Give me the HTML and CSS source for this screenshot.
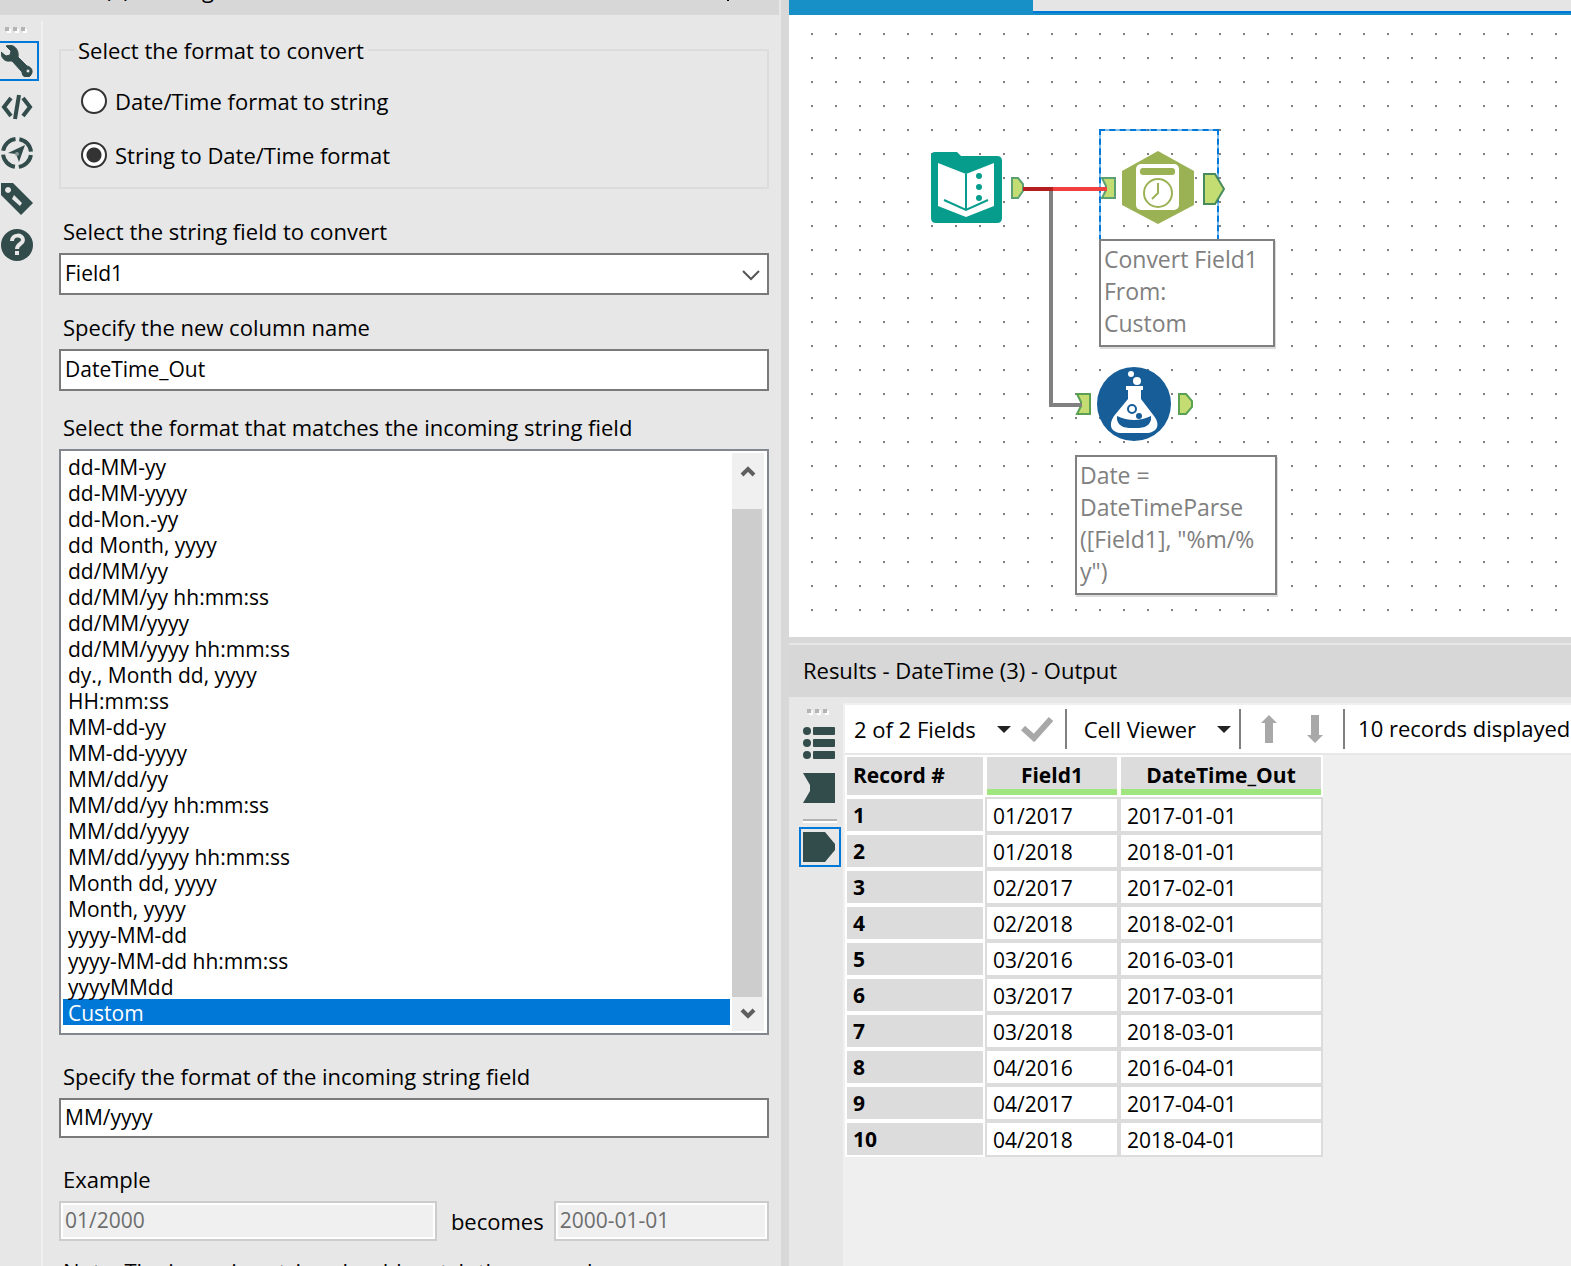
FILE: index.html
```
<!DOCTYPE html>
<html lang="en">
<head>
  <meta charset="UTF-8">
  <meta name="viewport" content="width=device-width, initial-scale=1.0">
  <title>DateTime (3) - Configuration</title>
  <link rel="stylesheet" href="styles.css">
</head>
<body>
  <div class="app">
    <section class="config">
      <header class="titlebar">
        <span class="title">DateTime (3) - Configuration</span>
        <span class="pin"></span>
      </header>
      <div class="config-body">
        <nav class="tools">
          <div class="grip"><i></i><i></i><i></i></div>
          <button class="tool active" aria-label="Configuration">
            <svg viewBox="0 0 32 32"><path d="M0 7c0 5 3 10 9 9l2 0 10 11c0 5 5 7 8 4 4-4 2-9-3-10L17 12c1-6-2-11-8-12L5 1l5 5-1 4-4 1zM27 24a2 2 0 1 1 0 4 2 2 0 0 1 0-4z" fill-rule="evenodd" stroke="#324b4b"/></svg>
          </button>
          <button class="tool" aria-label="XML view">
            <svg viewBox="0 0 32 32"><path d="M10 7L3 16l7 9M22 7l7 9-7 9M18 4l-4 24" fill="none" stroke="#324b4b" stroke-width="4"/></svg>
          </button>
          <button class="tool" aria-label="Navigation">
            <svg viewBox="0 0 32 32"><circle cx="16" cy="16" r="14" fill="none" stroke="#324b4b" stroke-width="4" stroke-dasharray="18 4" stroke-dashoffset="-2"/><path d="M24 8l-6 17-3-8-8-1z"/><circle cx="16" cy="17" r="2" fill="#8a9999"/></svg>
          </button>
          <button class="tool" aria-label="Annotation">
            <svg viewBox="0 0 32 32"><path d="M0 0h12l20 20-12 12L0 12zM7 4a3 3 0 1 0 .1 0zM13 12l-2 4 8 7 2-3z" fill-rule="evenodd"/></svg>
          </button>
          <button class="tool" aria-label="Help">
            <svg viewBox="0 0 32 32"><circle cx="16" cy="16" r="16"/><path d="M11 12c0-7 11-7 11-1 0 4-6 4-6 9" fill="none" stroke="#e7e7e7" stroke-width="4"/><path d="M14 22h4v4h-4z" fill="#e7e7e7"/></svg>
          </button>
        </nav>
        <form class="form">
          <fieldset class="direction">
            <legend>Select the format to convert</legend>
            <label class="radio"><input type="radio" name="direction">Date/Time format to string</label>
            <label class="radio"><input type="radio" name="direction" checked>String to Date/Time format</label>
          </fieldset>

          <div class="field">
            <label for="string-field">Select the string field to convert</label>
            <div class="combo">
              <select id="string-field" class="box"><option>Field1</option></select>
              <svg class="chevron" viewBox="0 0 18 12"><path d="M1 2l8 8 8-8"/></svg>
            </div>
          </div>

          <div class="field column">
            <label for="column-name">Specify the new column name</label>
            <input id="column-name" class="box" type="text" value="DateTime_Out">
          </div>

          <div class="field format">
            <label for="format-list">Select the format that matches the incoming string field</label>
            <div class="listbox">
              <select id="format-list" size="22">
                <option>dd-MM-yy</option>
                <option>dd-MM-yyyy</option>
                <option>dd-Mon.-yy</option>
                <option>dd Month, yyyy</option>
                <option>dd/MM/yy</option>
                <option>dd/MM/yy hh:mm:ss</option>
                <option>dd/MM/yyyy</option>
                <option>dd/MM/yyyy hh:mm:ss</option>
                <option>dy., Month dd, yyyy</option>
                <option>HH:mm:ss</option>
                <option>MM-dd-yy</option>
                <option>MM-dd-yyyy</option>
                <option>MM/dd/yy</option>
                <option>MM/dd/yy hh:mm:ss</option>
                <option>MM/dd/yyyy</option>
                <option>MM/dd/yyyy hh:mm:ss</option>
                <option>Month dd, yyyy</option>
                <option>Month, yyyy</option>
                <option>yyyy-MM-dd</option>
                <option>yyyy-MM-dd hh:mm:ss</option>
                <option>yyyyMMdd</option>
                <option selected>Custom</option>
              </select>
              <div class="scrollbar">
                <button type="button" class="scroll-up" aria-label="Scroll up"><svg viewBox="0 0 16 12"><path d="M2 10l6-6 6 6"/></svg></button>
                <div class="thumb"></div>
                <button type="button" class="scroll-down" aria-label="Scroll down"><svg viewBox="0 0 16 12"><path d="M2 2l6 6 6-6"/></svg></button>
              </div>
            </div>
          </div>

          <div class="field format">
            <label for="format">Specify the format of the incoming string field</label>
            <input id="format" class="box short" type="text" value="MM/yyyy">
          </div>

          <div class="field last">
            <label for="example-in">Example</label>
            <div class="example">
              <input id="example-in" class="box short in" type="text" value="01/2000" disabled>
              <label for="example-out">becomes</label>
              <input id="example-out" class="box short out" type="text" value="2000-01-01" disabled>
            </div>
          </div>
          <p class="note">Note: The incoming string should match the example</p>
        </form>
      </div>
    </section>

    <main class="workspace">
      <div class="tabs"><div class="tab"></div></div>
      <div class="canvas">
        <svg class="node input-node" viewBox="0 0 96 74">
          <path d="M1 5q0-4 4-4h22l4 4h36q5 0 5 5v57q0 5-5 5H6q-5 0-5-5z" fill="#069d8d"/>
          <path d="M8 12l28 11 28-11v43L36 66 8 55z" fill="#fff"/>
          <path d="M36 23v36M14 49l22 10 22-10" fill="none" stroke="#069d8d" stroke-width="2"/>
          <g fill="#069d8d"><circle cx="49" cy="25" r="3"/><circle cx="49" cy="36" r="3"/><circle cx="49" cy="47" r="3"/></g>
          <path d="M82 27h6l5 6v7l-5 7h-6z" fill="#c3dd72" stroke="#5b9f72" stroke-width="2"/>
        </svg>

        <div class="selection"></div>
        <svg class="node datetime-node" viewBox="0 0 128 76">
          <path d="M2 28h13v20H2l4-8v-4z" fill="#c3dd72" stroke="#5b9f72" stroke-width="2"/>
          <path d="M58 1l36 20v34L58 74 22 55V21z" fill="#9bb254"/>
          <rect x="36" y="14" width="43" height="46" rx="5" fill="#fff"/>
          <rect x="40" y="18" width="35" height="7" rx="3" fill="#9bb254"/>
          <path d="M58 33v10l-6 6" fill="none" stroke="#9bb254" stroke-width="2"/>
          <circle cx="58" cy="43" r="14" fill="none" stroke="#9bb254" stroke-width="2"/>
          <path d="M104 24h11l9 15-9 15h-11z" fill="#c3dd72" stroke="#478a5b" stroke-width="2"/>
        </svg>
        <div class="annotation datetime-note">Convert Field1 From:<br>Custom</div>

        <svg class="node formula-node" viewBox="0 0 120 76">
          <path d="M2 28h13v20H2l4-8v-4z" fill="#c3dd72" stroke="#5b9f52" stroke-width="2"/>
          <circle cx="59" cy="38" r="37" fill="#175e99"/>
          <path d="M51 20h17v4h-2v9l13 17c7 9 3 17-8 17H47c-11 0-14-8-8-17l14-17v-9h-2z" fill="#fff"/>
          <path d="M42 50q17 8 34 0 1 11-12 12H54q-13-1-12-12z" fill="#175e99"/>
          <circle cx="57" cy="43" r="4" fill="none" stroke="#175e99" stroke-width="2"/>
          <circle cx="64" cy="50" r="3" fill="#175e99"/>
          <circle cx="62" cy="15" r="4" fill="#fff"/><circle cx="56" cy="8" r="3" fill="#fff"/>
          <path d="M104 28h7l6 7v6l-6 7h-7z" fill="#c3dd72" stroke="#5b9f52" stroke-width="2"/>
        </svg>
        <div class="annotation formula-note">Date = DateTimeParse<br>([Field1], "%m/%<br>y")</div>

        <svg class="wires" viewBox="0 0 500 420">
          <path d="M262 174v216h31" stroke="#808080"/>
          <path d="M262 174h56" stroke="#f04040"/>
          <path d="M234 174h30" stroke="#b41e1e"/>
        </svg>
      </div>

      <section class="results">
        <header class="results-title">Results - DateTime (3) - Output</header>
        <div class="results-body">
          <nav class="views">
            <div class="grip"><i></i><i></i><i></i></div>
            <button class="view" aria-label="Messages">
              <svg viewBox="0 0 32 32"><circle cx="4" cy="4" r="4"/><circle cx="4" cy="16" r="4"/><circle cx="4" cy="28" r="4"/><rect x="10" width="22" height="8" rx="1"/><rect x="10" y="12" width="22" height="8" rx="1"/><rect x="10" y="24" width="22" height="8" rx="1"/></svg>
            </button>
            <button class="view" aria-label="Input anchor">
              <svg viewBox="0 0 32 32"><path d="M0 1h32v30H0l7-12v-6z"/></svg>
            </button>
            <hr>
            <button class="view active" aria-label="Output anchor">
              <svg viewBox="0 0 32 32"><path d="M0 1h22l10 12v6L22 31H0z"/></svg>
            </button>
          </nav>
          <div class="grid">
            <div class="toolbar">
              <button class="menu fields">2 of 2 Fields <i class="caret"></i></button>
              <svg class="check" viewBox="0 0 32 26"><path d="M2 12l11 10L30 3" fill="none" stroke="#a8a8a8" stroke-width="6"/></svg>
              <button class="menu viewer">Cell Viewer <i class="caret"></i></button>
              <div class="arrows">
                <svg viewBox="0 0 16 28"><path d="M8 0l8 8h-4v20H4V8H0z"/></svg>
                <svg viewBox="0 0 16 28"><path d="M8 28l8-8h-4V0H4v20H0z"/></svg>
              </div>
              <span class="count">10 records displayed</span>
            </div>
            <table class="records">
              <thead>
                <tr><th class="num">Record #</th><th class="col short-col">Field1</th><th class="col long-col">DateTime_Out</th></tr>
              </thead>
              <tbody>
                <tr><th>1</th><td>01/2017</td><td>2017-01-01</td></tr>
                <tr><th>2</th><td>01/2018</td><td>2018-01-01</td></tr>
                <tr><th>3</th><td>02/2017</td><td>2017-02-01</td></tr>
                <tr><th>4</th><td>02/2018</td><td>2018-02-01</td></tr>
                <tr><th>5</th><td>03/2016</td><td>2016-03-01</td></tr>
                <tr><th>6</th><td>03/2017</td><td>2017-03-01</td></tr>
                <tr><th>7</th><td>03/2018</td><td>2018-03-01</td></tr>
                <tr><th>8</th><td>04/2016</td><td>2016-04-01</td></tr>
                <tr><th>9</th><td>04/2017</td><td>2017-04-01</td></tr>
                <tr><th>10</th><td>04/2018</td><td>2018-04-01</td></tr>
              </tbody>
            </table>
          </div>
        </div>
      </section>
    </main>
  </div>
</body>
</html>
```
FILE: styles.css
```
* {
  box-sizing: border-box;
}
body {
  margin: 0;
  font-family: "Open Sans", "Noto Sans", sans-serif;
  font-size: 22px;
  line-height: 28px;
  color: #000;
  background: #e7e7e7;
}
button, input, select {
  font: inherit;
  color: inherit;
  margin: 0;
}
input, select {
  font-size: 21px;
}
button {
  border: 0;
  padding: 0;
  background: none;
}
svg {
  display: block;
  fill: #324b4b;
}
.app {
  display: flex;
  height: 100vh;
  overflow: hidden;
}

/* configuration panel */
.config {
  flex: 0 0 50.22%;
  min-width: 0;
  display: flex;
  flex-direction: column;
  border-right: 8px solid #d8d8d8;
}
.titlebar {
  height: 15px;
  flex: none;
  margin-right: 2px;
  display: flex;
  align-items: flex-end;
  justify-content: space-between;
  padding: 0 50px 12px 0;
  background: #d7d7d7;
}
.pin {
  width: 2px;
  height: 28px;
  flex: none;
  margin-bottom: 2px;
  background: #000;
}
.config-body {
  display: flex;
  flex: 1;
  min-height: 0;
}
.tools {
  width: 43px;
  flex: none;
  margin-top: 6px;
  border-right: 2px solid #f0f0f0;
}
.grip {
  display: flex;
  gap: 4px;
  padding: 6px 0 10px 5px;
}
.grip i {
  width: 4px;
  height: 4px;
  background: #b4b4b4;
  box-shadow: 2px 2px #fff;
}
.tool {
  display: block;
  width: 39px;
  height: 40px;
  margin-bottom: 6px;
  padding-left: 1px;
  border: solid transparent;
  border-width: 2px 2px 2px 0;
}
.tool.active {
  border-color: #0078d7;
}
.tool svg {
  width: 32px;
  height: 32px;
}
.form {
  flex: 1;
  min-width: 0;
  padding: 21px 12px 0 16px;
}
.direction {
  margin: 0 0 28px;
  padding: 10px 19px 5px 13px;
  border: 2px solid #dcdcdc;
}
.direction legend {
  padding: 0 4px;
}
.radio {
  display: flex;
  align-items: center;
  gap: 8px;
  height: 54px;
  padding-left: 7px;
}
.radio input {
  appearance: none;
  width: 26px;
  height: 26px;
  border: 2px solid #333;
  border-radius: 50%;
  background: #fff;
}
.radio input:checked {
  background: radial-gradient(circle, #333 7px, #fff 8px);
}
.field {
  display: flex;
  flex-direction: column;
  gap: 8px;
  margin-bottom: 18px;
}
.field.column {
  margin-bottom: 22px;
}
.field.format {
  margin-bottom: 27px;
}
.field.last {
  margin-bottom: 16px;
}
.field > label {
  padding-left: 4px;
}
.box {
  width: 100%;
  height: 42px;
  padding: 0 4px 2px;
  border: 2px solid #7a7a7a;
  border-radius: 0;
  background: #fff;
}
.box.short {
  height: 40px;
}
.combo {
  position: relative;
}
.combo select {
  display: block;
  appearance: none;
}
.chevron {
  position: absolute;
  right: 9px;
  top: 16px;
  width: 18px;
  height: 12px;
  fill: none;
  stroke: #555;
  stroke-width: 2;
}
.listbox {
  display: flex;
  padding: 2px 3px 2px 2px;
  border: 2px solid #828790;
  background: #fff;
}
.listbox select {
  flex: 1;
  min-width: 0;
  height: 578px;
  margin-right: 2px;
  padding: 0;
  border: 0;
  outline: 0;
  overflow: hidden;
  background: #fff;
  scrollbar-width: none;
}
.listbox option {
  height: 26px;
  padding: 0 5px;
  line-height: 26px;
}
.listbox option:checked {
  color: #fff;
  background: #0078d7 linear-gradient(#0078d7, #0078d7);
}
.scrollbar {
  width: 32px;
  display: flex;
  flex-direction: column;
  background: #f0f0f0;
}
.scrollbar svg {
  width: 16px;
  height: 12px;
  margin: auto;
  fill: none;
  stroke: #5f5f5f;
  stroke-width: 4;
}
.scroll-up {
  height: 36px;
  margin-bottom: 20px;
}
.thumb {
  flex: 1;
  width: 30px;
  background: #cdcdcd;
}
.scroll-down {
  height: 34px;
}
.example {
  display: flex;
  align-items: center;
}
.example .in {
  flex: 9;
}
.example .out {
  flex: 5;
}
.example label {
  margin: 0 10px 0 14px;
}
.box:disabled {
  color: #6d6d6d;
  border-color: #ccc;
  background: #f0f0f0;
  box-shadow: inset 0 0 0 2px #fff;
}
.note {
  margin: 0;
  padding-left: 4px;
  white-space: nowrap;
}

/* canvas */
.workspace {
  flex: 1;
  min-width: 0;
  display: flex;
  flex-direction: column;
}
.tabs {
  height: 15px;
  flex: none;
  background: linear-gradient(#e5e5e5 11px, #0078d7 11px, #0078d7 13px, #1790c8 13px);
}
.tab {
  width: 244px;
  height: 15px;
  background: #1790c8;
}
.canvas {
  position: relative;
  height: 622px;
  flex: none;
  border-bottom: 10px solid #fff;
  background-color: #fff;
  background-image: conic-gradient(from 90deg at 22px 22px, #808080 90deg, transparent 0);
  background-position: 0 -4px;
  background-size: 24px 24px;
}
.canvas > * {
  position: absolute;
}
.wires {
  left: 0;
  top: 0;
  width: 500px;
  height: 420px;
  fill: none;
  stroke-width: 4;
}
.input-node {
  left: 141px;
  top: 136px;
  width: 96px;
  height: 74px;
}
.selection {
  left: 310px;
  top: 114px;
  width: 120px;
  height: 112px;
  border: 2px dashed #0078d7;
  outline: 2px solid rgba(0, 120, 215, 0.5);
  outline-offset: -2px;
}
.datetime-node {
  left: 311px;
  top: 135px;
  width: 128px;
  height: 76px;
}
.formula-node {
  left: 286px;
  top: 351px;
  width: 120px;
  height: 76px;
}
.annotation {
  padding: 2px 3px 6px;
  font-size: 23px;
  line-height: 32px;
  color: #808080;
  background: #fff;
  border: 2px solid #808080;
  box-shadow: 1px 2px #ddd;
}
.datetime-note {
  left: 310px;
  top: 224px;
  width: 176px;
}
.formula-note {
  left: 286px;
  top: 440px;
  width: 202px;
}

/* results */
.results {
  flex: 1;
  min-height: 0;
  display: flex;
  flex-direction: column;
  border-top: 6px solid #d8d8d8;
}
.results-title {
  height: 52px;
  margin-top: 2px;
  flex: none;
  padding: 11px 14px;
  background: #d7d7d7;
}
.results-body {
  display: flex;
  flex: 1;
}
.views {
  width: 54px;
  flex: none;
  padding-left: 10px;
}
.views .grip {
  padding: 12px 0 10px 8px;
}
.view {
  display: block;
  width: 42px;
  height: 40px;
  padding: 2px;
  margin-bottom: 5px;
  border: 2px solid transparent;
}
.view.active {
  border-color: #0078d7;
}
.view svg {
  width: 32px;
  height: 32px;
}
.views hr {
  width: 34px;
  height: 4px;
  margin: 11px 0 4px 4px;
  border: solid #fff;
  border-width: 0 0 2px;
  background: #b4b4b4;
}
.grid {
  flex: 1;
  min-width: 0;
  margin-top: 6px;
  border: solid #f0f0f0;
  border-width: 2px 0 0 2px;
  background: #efefef;
}
.toolbar {
  height: 50px;
  display: flex;
  align-items: center;
  padding-left: 9px;
  overflow: hidden;
  white-space: nowrap;
  background: #fff;
  border-bottom: 2px solid #e7e7e7;
}
.menu {
  display: flex;
  align-items: center;
  gap: 21px;
}
.caret {
  border: 7px solid transparent;
  border-top-color: #222;
  border-bottom: 0;
}
.check {
  width: 32px;
  height: 26px;
  margin: 0 12px 0 10px;
}
.viewer, .arrows, .count {
  height: 40px;
  border-left: 2px solid #808080;
}
.viewer {
  padding: 0 8px 0 17px;
}
.arrows {
  display: flex;
  align-items: center;
  gap: 30px;
  padding: 0 20px;
}
.arrows svg {
  width: 16px;
  height: 28px;
  fill: #a8a8a8;
}
.count {
  padding-left: 13px;
  line-height: 38px;
}
.records {
  border-spacing: 0;
  font-size: 21px;
}
.records th, .records td {
  height: 36px;
  padding: 0 6px;
  text-align: left;
}
.records th {
  border: 2px solid #fff;
  background: #dcdcdc;
}
.records td {
  padding-top: 2px;
  border: 2px solid #dcdcdc;
  background: #fff;
}
.records thead th {
  height: 42px;
  padding-bottom: 2px;
}
.records .col {
  text-align: center;
  box-shadow: inset 0 -6px #a0e67e;
}
.num {
  width: 140px;
}
.short-col {
  width: 134px;
}
.long-col {
  width: 204px;
}
```
